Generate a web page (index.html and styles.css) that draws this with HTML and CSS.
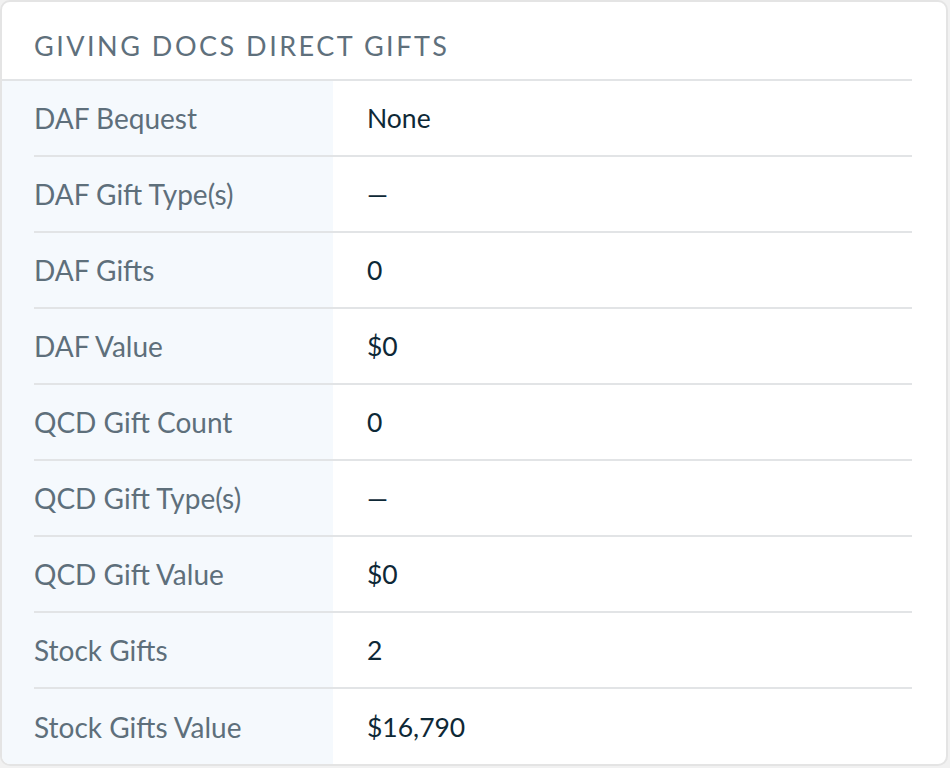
FILE: index.html
```html
<!DOCTYPE html>
<html lang="en">
<head>
    <meta charset="UTF-8">
    <meta name="viewport" content="width=device-width, initial-scale=1.0">
    <title>Giving Docs Direct Gifts</title>
    <link rel="stylesheet" href="styles.css">
</head>
<body>
    <div class="card">
        <div class="card-title">GIVING DOCS DIRECT GIFTS</div>

        <div class="rows">
            <div class="row">
                <div class="label">DAF Bequest</div>
                <div class="value">None</div>
            </div>
            <div class="row">
                <div class="label">DAF Gift Type(s)</div>
                <div class="value">—</div>
            </div>
            <div class="row">
                <div class="label">DAF Gifts</div>
                <div class="value">0</div>
            </div>
            <div class="row">
                <div class="label">DAF Value</div>
                <div class="value">$0</div>
            </div>
            <div class="row">
                <div class="label">QCD Gift Count</div>
                <div class="value">0</div>
            </div>
            <div class="row">
                <div class="label">QCD Gift Type(s)</div>
                <div class="value">—</div>
            </div>
            <div class="row">
                <div class="label">QCD Gift Value</div>
                <div class="value">$0</div>
            </div>
            <div class="row">
                <div class="label">Stock Gifts</div>
                <div class="value">2</div>
            </div>
            <div class="row">
                <div class="label">Stock Gifts Value</div>
                <div class="value">$16,790</div>
            </div>
        </div>
    </div>
</body>
</html>
```

FILE: styles.css
```css
* {
    margin: 0;
    padding: 0;
    box-sizing: border-box;
    font-family: Lato, "Open Sans", sans-serif;
}
body {
    background-color: #f1f1f1;
}
.card {
    width: 948px;
    height: 766px;
    background-color: white;
    border: 2px solid #e4e4e4;
    border-radius: 10px;
    overflow: hidden;
}
.card-title {
    height: 79px;
    margin-right: 34px;
    padding: 29px 0 0 32px;
    border-bottom: 2px solid #e2e4e6;
    color: #5f707c;
    font-size: 27px;
    letter-spacing: 2.5px;
    line-height: 30px;
}
.rows {
    margin-right: 34px;
    padding-left: 32px;
    background: linear-gradient(90deg, #f5f9fd 331px, white 331px);
}
.row {
    display: grid;
    grid-template-columns: 299px 1fr;
    align-items: center;
    height: 76px;
    border-bottom: 2px solid #e2e4e6;
}
.row:last-child {
    border-bottom: none;
}
.label {
    color: #5e6f7b;
    font-size: 28px;
}
.value {
    padding-left: 34px;
    color: #0e2836;
    font-size: 26.5px;
}
```
